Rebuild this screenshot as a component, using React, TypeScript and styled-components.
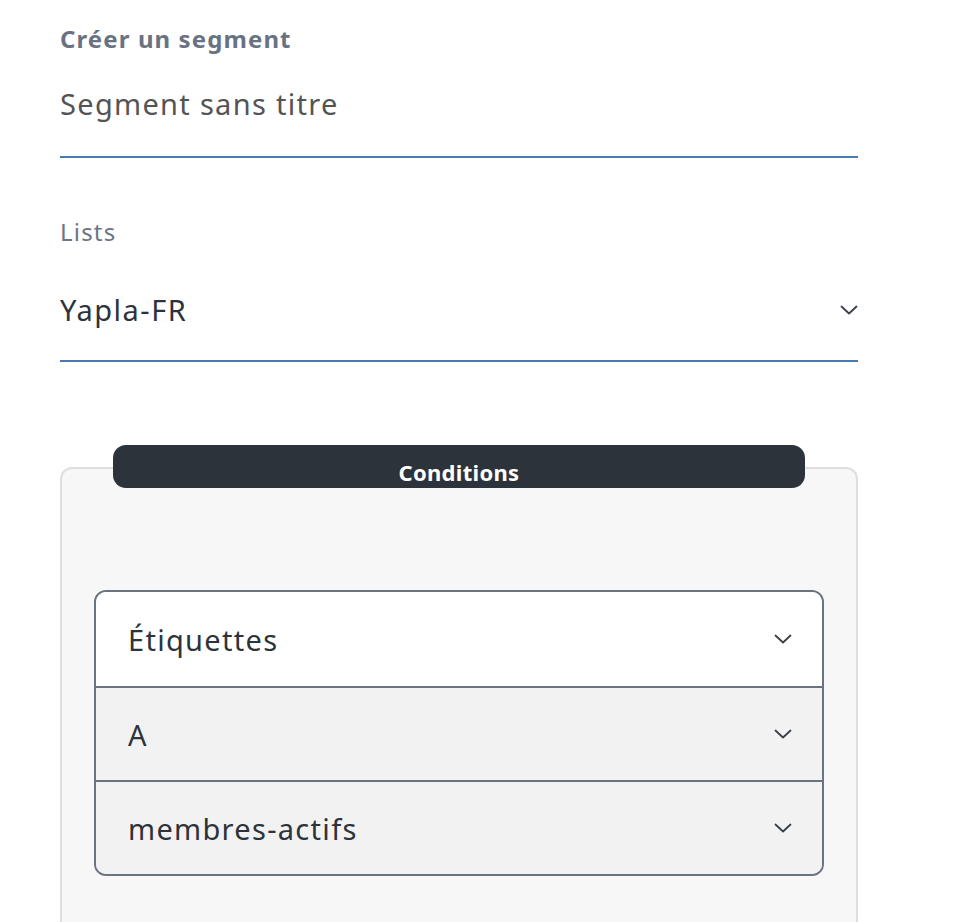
import React from 'react';
import styled, { createGlobalStyle } from 'styled-components';

const GlobalStyle = createGlobalStyle`
  html, body {
    margin: 0;
    padding: 0;
    background: #ffffff;
  }
  body {
    font-family: "Noto Sans", Lato, sans-serif;
  }
`;

const Page = styled.div`
  width: 798px;
  padding: 22px 0 0 60px;
  display: flex;
  flex-direction: column;
`;

const Heading = styled.h1`
  margin: 0;
  font-size: 24px;
  line-height: 34px;
  letter-spacing: 1.1px;
  font-weight: 700;
  color: #687282;
`;

const TextField = styled.div`
  margin-top: 28px;
  padding-bottom: 32px;
  border-bottom: 2px solid #4a78b0;
  font-size: 29px;
  line-height: 40px;
  letter-spacing: 1.3px;
  color: #545454;
`;

const FieldLabel = styled.div`
  margin-top: 58px;
  font-size: 24px;
  line-height: 32px;
  letter-spacing: 1.2px;
  color: #6b7585;
`;

const SelectField = styled.div`
  margin-top: 42px;
  padding-bottom: 30px;
  border-bottom: 2px solid #4a78b0;
  display: flex;
  align-items: center;
  justify-content: space-between;
  font-size: 29px;
  line-height: 40px;
  letter-spacing: 1.5px;
  color: #2d333a;
`;

const Panel = styled.div`
  position: relative;
  margin-top: 105px;
  box-sizing: border-box;
  min-height: 500px;
  padding: 121px 32px 0;
  background: #f7f7f7;
  border: 2px solid #dedede;
  border-bottom: none;
  border-radius: 12px 12px 0 0;
`;

const PanelTitle = styled.div`
  position: absolute;
  top: -24px;
  left: 51px;
  right: 51px;
  height: 43px;
  padding-top: 7px;
  box-sizing: border-box;
  background: #2d333b;
  border-radius: 13px;
  color: #ffffff;
  text-align: center;
  font-size: 22px;
  line-height: 40px;
  letter-spacing: 0.3px;
  font-weight: 700;
`;

const SelectGroup = styled.div`
  border: 2px solid #6b7381;
  border-radius: 12px;
  overflow: hidden;
`;

const GroupRow = styled.div<{ $active?: boolean }>`
  height: 94px;
  box-sizing: border-box;
  padding: 0 30px 0 32px;
  display: flex;
  align-items: center;
  justify-content: space-between;
  background: ${p => (p.$active ? '#ffffff' : '#f2f2f2')};
  font-size: 29px;
  letter-spacing: 1.3px;
  color: #2d333a;

  & + & {
    border-top: 2px solid #6b7381;
  }
`;

const Chevron = () => (
  <svg width="18" height="10" viewBox="0 0 18 10" fill="none">
    <path d="M1.5 1.5L9 8.5L16.5 1.5" stroke="#3a4049" strokeWidth="1.8" strokeLinecap="round" strokeLinejoin="round" />
  </svg>
);

const conditions = [
  { label: 'Étiquettes', active: true },
  { label: 'A', active: false },
  { label: 'membres-actifs', active: false },
];

export default function App() {
  return (
    <>
      <GlobalStyle />
      <Page>
        <Heading>Créer un segment</Heading>
        <TextField>Segment sans titre</TextField>

        <FieldLabel>Lists</FieldLabel>
        <SelectField>
          <span>Yapla-FR</span>
          <Chevron />
        </SelectField>

        <Panel>
          <PanelTitle>Conditions</PanelTitle>
          <SelectGroup>
            {conditions.map(c => (
              <GroupRow key={c.label} $active={c.active}>
                <span>{c.label}</span>
                <Chevron />
              </GroupRow>
            ))}
          </SelectGroup>
        </Panel>
      </Page>
    </>
  );
}
